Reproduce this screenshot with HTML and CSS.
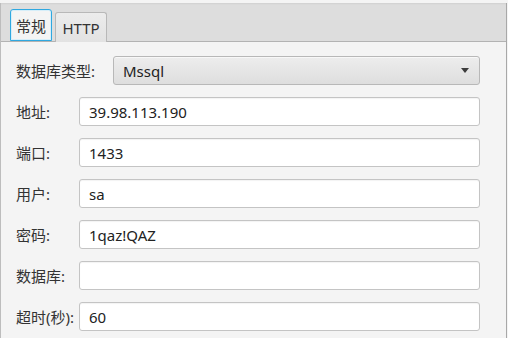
FILE: index.html
```
<!DOCTYPE html>
<html lang="zh-CN">
  <head>
    <meta charset="utf-8" />
    <title>连接设置</title>
    <link rel="stylesheet" href="styles.css">
  </head>
  <body>
    <div class="window">
      <div class="tab-header">
        <div class="tab tab--selected">常规</div>
        <div class="tab">HTTP</div>
      </div>
      <div class="tab-content">
        <div class="row row--wide">
          <label class="row__label">数据库类型:</label>
          <div class="combo">
            <span class="combo__value">Mssql</span>
            <span class="combo__arrow"></span>
          </div>
        </div>
        <div class="row">
          <label class="row__label">地址:</label>
          <div class="field">39.98.113.190</div>
        </div>
        <div class="row">
          <label class="row__label">端口:</label>
          <div class="field">1433</div>
        </div>
        <div class="row">
          <label class="row__label">用户:</label>
          <div class="field">sa</div>
        </div>
        <div class="row">
          <label class="row__label">密码:</label>
          <div class="field">1qaz!QAZ</div>
        </div>
        <div class="row">
          <label class="row__label">数据库:</label>
          <div class="field"></div>
        </div>
        <div class="row">
          <label class="row__label">超时(秒):</label>
          <div class="field">60</div>
        </div>
      </div>
    </div>
  </body>
</html>
```

FILE: styles.css
```
:root {
  --color-bg: #f4f4f4;
  --color-header: #dddddd;
  --color-border: #b3b3b3;
  --color-field-border: #c4c4c4;
  --color-focus: #2fa8e0;
  --color-text: #333333;
}

html,
body {
  margin: 0;
  padding: 0;
  background: var(--color-bg);
}
body {
  width: 508px;
  height: 338px;
  overflow: hidden;
  font-family: "Noto Sans", "Noto Sans CJK SC", sans-serif;
  font-size: 15px;
  color: var(--color-text);
}

.window {
  margin-top: 3px;
  width: 505px;
  height: 335px;
  border-left: 1px solid #bdbdbd;
  border-right: 1px solid #a8a8a8;
  box-sizing: border-box;
  width: 507px;
}

.tab-header {
  height: 39px;
  box-sizing: border-box;
  background: var(--color-header);
  border-bottom: 1px solid var(--color-border);
  box-shadow: inset 0 2px 2px -1px rgba(0, 0, 0, 0.06);
  display: flex;
  align-items: flex-end;
  padding-left: 9px;
  gap: 3px;
}
.tab {
  height: 30px;
  margin-bottom: -1px;
  box-sizing: border-box;
  padding: 0 8px;
  display: flex;
  align-items: center;
  border: 1px solid #b8b8b8;
  border-bottom: none;
  border-radius: 3px 3px 0 0;
  background: linear-gradient(#ececec, #e2e2e2);
  width: 52px;
  justify-content: center;
}
.tab--selected {
  height: 32px;
  width: 42px;
  padding: 0;
  background: var(--color-bg);
  border: 1px solid var(--color-focus);
  border-bottom: 1px solid var(--color-focus);
  box-shadow: inset 0 0 0 1px #d6eef9;
  margin-bottom: 0;
}

.tab-content {
  padding: 14px 0 0 15px;
  display: flex;
  flex-direction: column;
  gap: 12px;
}
.row {
  display: flex;
  align-items: center;
  height: 29px;
}
.row__label {
  width: 63px;
  flex: none;
  white-space: nowrap;
}
.row--wide .row__label {
  width: 97px;
}

.field,
.combo {
  box-sizing: border-box;
  height: 29px;
  width: 401px;
  border: 1px solid var(--color-field-border);
  border-radius: 3px;
  background: #ffffff;
  box-shadow: inset 0 1px 1px rgba(0, 0, 0, 0.05);
  padding: 0 9px;
  display: flex;
  align-items: center;
  color: #222222;
}
.combo {
  width: 367px;
  border-color: #b8b8b8;
  background: linear-gradient(#ededed, #dedede);
  box-shadow: inset 0 1px 0 rgba(255, 255, 255, 0.6);
  justify-content: space-between;
  padding-right: 10px;
}
.combo__arrow {
  width: 0;
  height: 0;
  border-left: 4px solid transparent;
  border-right: 4px solid transparent;
  border-top: 5px solid #3c3c3c;
}
```
